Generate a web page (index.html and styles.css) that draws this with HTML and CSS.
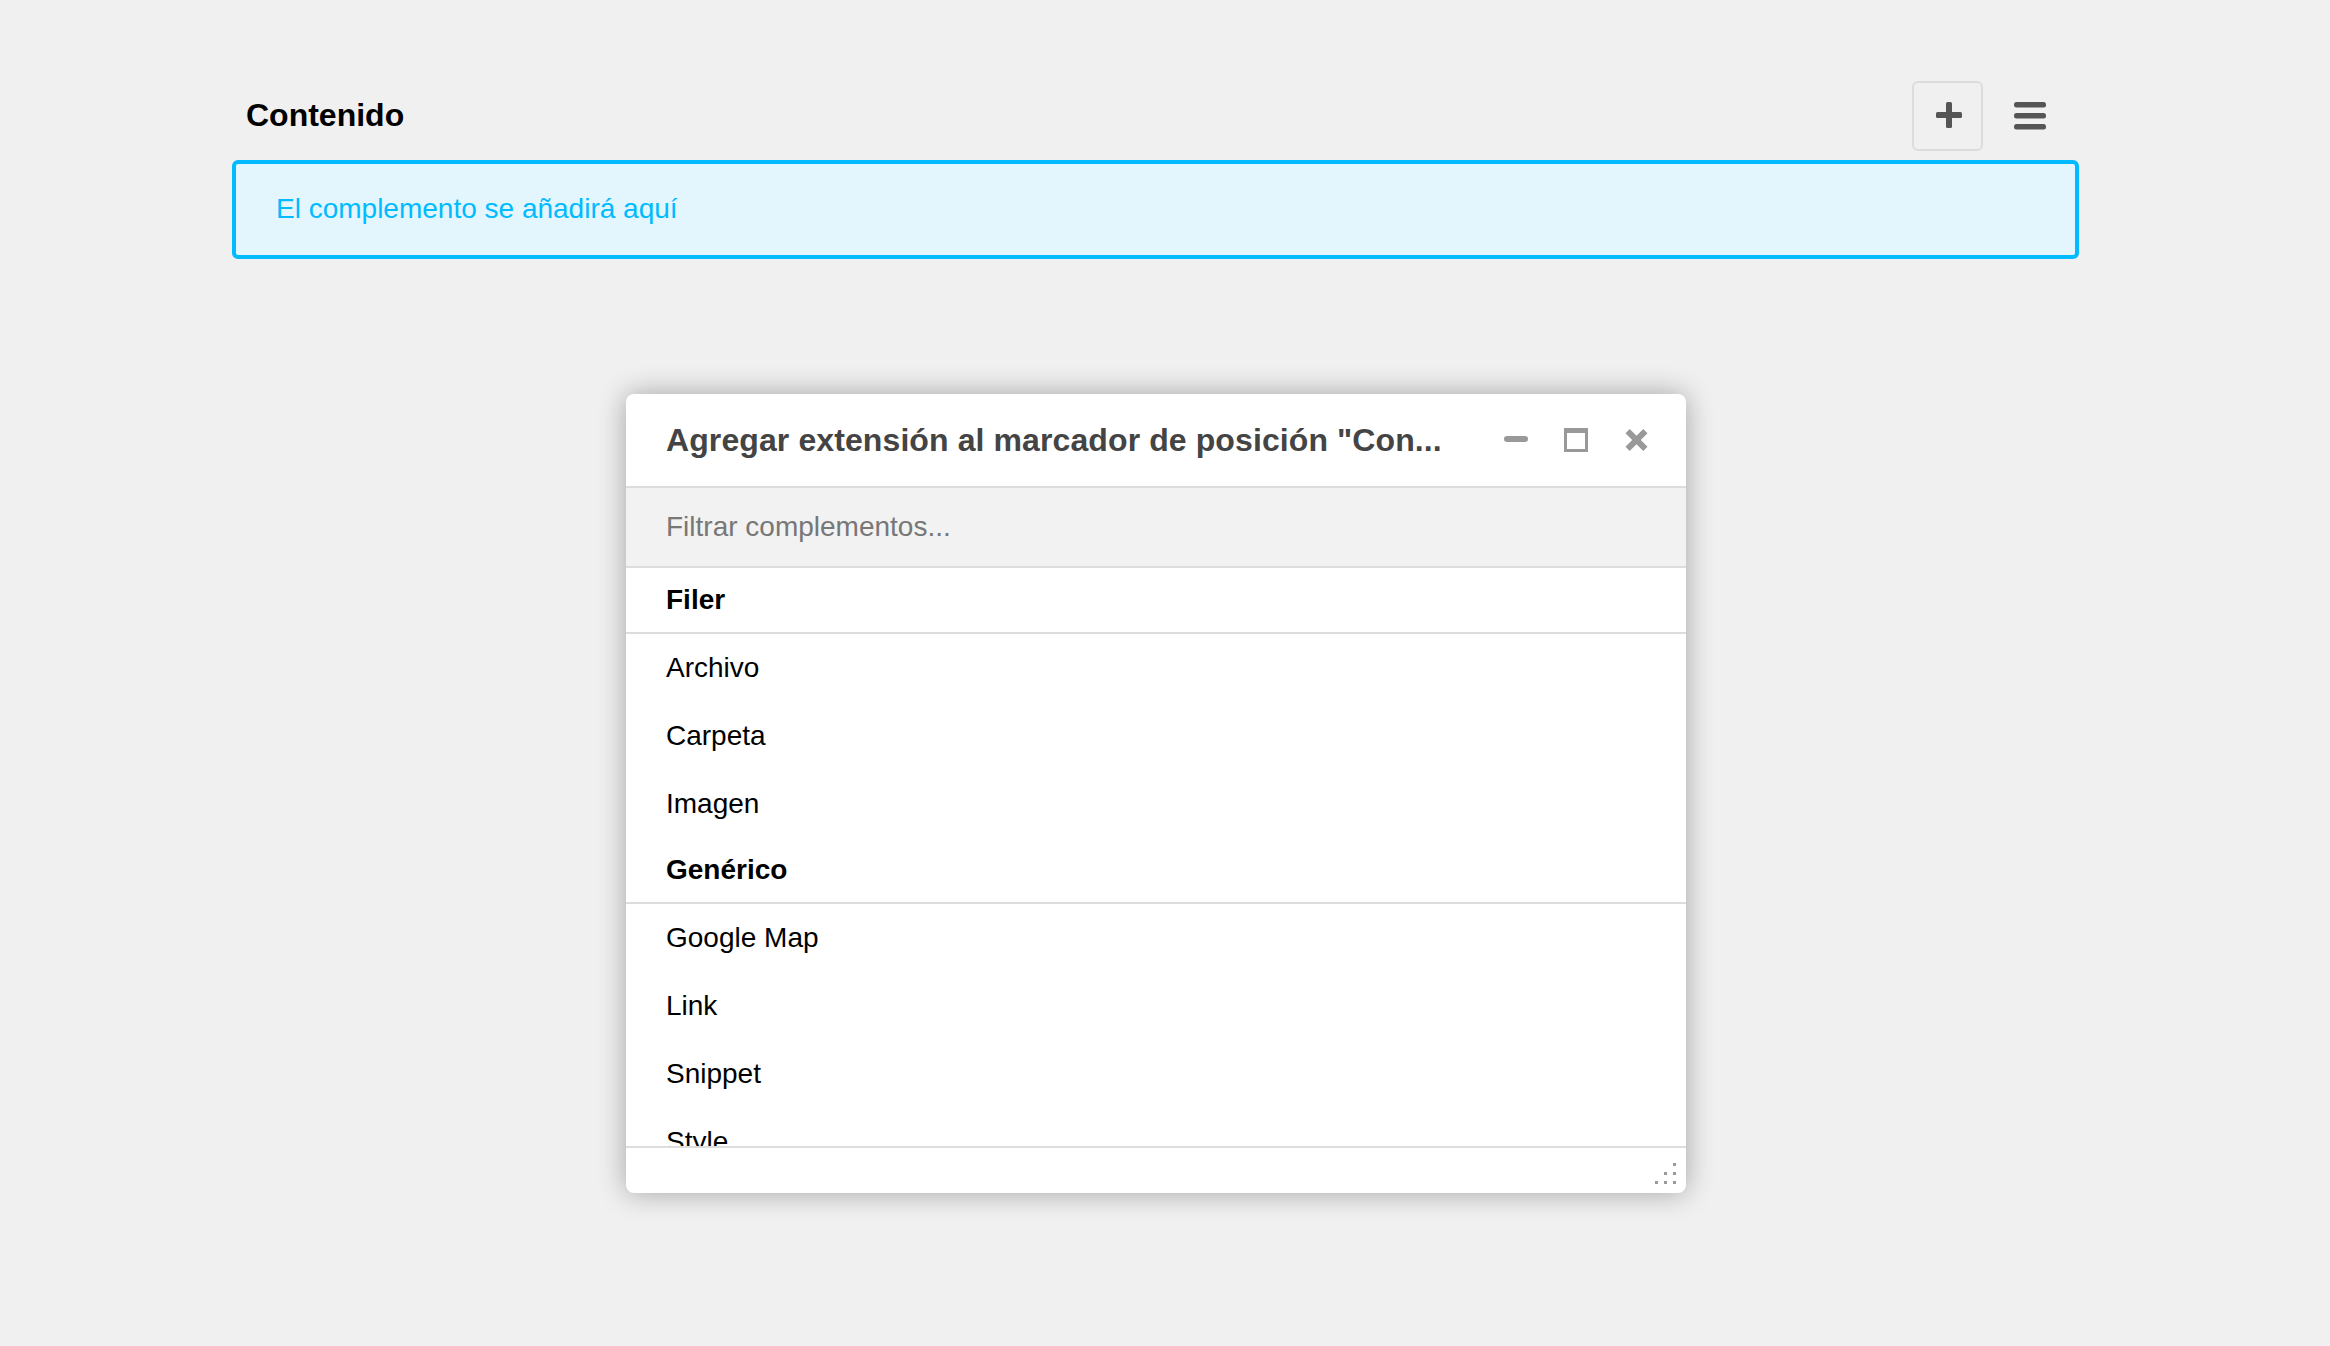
FILE: index.html
```html
<!DOCTYPE html>
<html lang="es">
<head>
<meta charset="utf-8">
<title>Contenido</title>
<link rel="stylesheet" href="styles.css">
</head>
<body>
<div class="page">
  <div class="toolbar">
    <h2 class="toolbar-title">Contenido</h2>
    <div class="toolbar-actions">
      <button class="tool-btn tool-btn--bordered" aria-label="Agregar">
        <svg width="26" height="26" viewBox="0 0 26 26"><rect x="0" y="10" width="26" height="6" rx="1.5"/><rect x="10" y="0" width="6" height="26" rx="1.5"/></svg>
      </button>
      <button class="tool-btn" aria-label="Menú">
        <svg width="32" height="28" viewBox="0 0 32 28"><rect x="0" y="0" width="32" height="5.5" rx="2.5"/><rect x="0" y="11" width="32" height="5.5" rx="2.5"/><rect x="0" y="22" width="32" height="5.5" rx="2.5"/></svg>
      </button>
    </div>
  </div>
  <div class="drop-target">El complemento se añadirá aquí</div>
</div>

<div class="modal">
  <div class="modal-header">
    <div class="modal-title">Agregar extensión al marcador de posición "Con...</div>
    <div class="modal-controls">
      <button class="ctrl-btn" aria-label="Minimizar"><span class="icon-min"></span></button>
      <button class="ctrl-btn" aria-label="Maximizar"><span class="icon-max"></span></button>
      <button class="ctrl-btn" aria-label="Cerrar">
        <svg width="25" height="24" viewBox="0 0 25 24"><path d="M3.6 3.1 L21.4 20.9 M21.4 3.1 L3.6 20.9"/></svg>
      </button>
    </div>
  </div>
  <div class="modal-filter">Filtrar complementos...</div>
  <div class="modal-list">
    <div class="list-group">Filer</div>
    <div class="list-item">Archivo</div>
    <div class="list-item">Carpeta</div>
    <div class="list-item">Imagen</div>
    <div class="list-group">Genérico</div>
    <div class="list-item">Google Map</div>
    <div class="list-item">Link</div>
    <div class="list-item">Snippet</div>
    <div class="list-item">Style</div>
  </div>
  <div class="modal-footer">
    <svg class="grip" width="21" height="21" viewBox="0 0 21 21"><rect x="18" y="0" width="3" height="3"/><rect x="9" y="9" width="3" height="3"/><rect x="18" y="9" width="3" height="3"/><rect x="0" y="18" width="3" height="3"/><rect x="9" y="18" width="3" height="3"/><rect x="18" y="18" width="3" height="3"/></svg>
  </div>
</div>
</body>
</html>
```

FILE: styles.css
```css
html, body {
  margin: 0;
  padding: 0;
}
body {
  background: #f0f0f0;
  font-family: "Liberation Sans", Arial, Helvetica, sans-serif;
  width: 2330px;
  height: 1346px;
  overflow: hidden;
}
.page {
  padding: 81px 251px 0 232px;
}
.toolbar {
  display: flex;
  align-items: center;
  justify-content: space-between;
  height: 70px;
  padding: 0 14px;
}
.toolbar-title {
  margin: 0;
  font-size: 32px;
  font-weight: bold;
  color: #000;
  line-height: 36px;
  position: relative;
  top: -1px;
}
.toolbar-actions {
  display: flex;
  gap: 11px;
}
.tool-btn {
  width: 71px;
  height: 70px;
  display: flex;
  align-items: center;
  justify-content: center;
  background: transparent;
  border: 2px solid transparent;
  border-radius: 6px;
  padding: 0;
  box-sizing: border-box;
}
.tool-btn svg {
  fill: #555;
}
.tool-btn--bordered {
  border-color: #dcdcdc;
}
.tool-btn--bordered svg {
  margin-left: 3px;
  margin-top: -2px;
}
.drop-target {
  margin-top: 9px;
  border: 4px solid #00bbff;
  border-radius: 6px;
  background: #e3f6fe;
  color: #00bbff;
  font-size: 28px;
  line-height: 32px;
  padding: 29px 40px 30px 40px;
}

/* Modal dialog */
.modal {
  position: absolute;
  left: 626px;
  top: 394px;
  width: 1060px;
  height: 799px;
  background: #fff;
  border-radius: 8px;
  box-shadow: 0 0 28px rgba(0, 0, 0, 0.32);
  display: flex;
  flex-direction: column;
  overflow: hidden;
}
.modal-header {
  height: 92px;
  flex: none;
  display: flex;
  align-items: center;
  border-bottom: 2px solid #dddddd;
  padding: 0 20px 0 40px;
}
.modal-title {
  flex: 1;
  font-size: 32px;
  font-weight: bold;
  color: #444;
  white-space: nowrap;
  overflow: hidden;
  line-height: 36px;
  letter-spacing: 0.1px;
}
.modal-controls {
  display: flex;
  height: 100%;
}
.ctrl-btn {
  width: 60px;
  height: 100%;
  border: 0;
  background: transparent;
  padding: 0;
  display: flex;
  align-items: center;
  justify-content: center;
}
.ctrl-btn svg path {
  stroke: #999;
  stroke-width: 6;
  fill: none;
}
.icon-min {
  display: block;
  width: 24px;
  height: 6px;
  border-radius: 3px;
  background: #999;
  margin-top: -2px;
}
.icon-max {
  display: block;
  width: 24px;
  height: 24px;
  box-sizing: border-box;
  border: 3px solid #999;
  border-top-width: 5px;
}
.modal-filter {
  flex: none;
  height: 78px;
  background: #f2f2f2;
  border-bottom: 2px solid #dddddd;
  padding: 0 40px;
  display: flex;
  align-items: center;
  font-size: 28px;
  color: #777;
}
.modal-list {
  flex: 1;
  overflow: hidden;
}
.list-group {
  font-size: 28px;
  font-weight: bold;
  color: #000;
  line-height: 32px;
  padding: 16px 40px;
  border-bottom: 2px solid #dddddd;
}
.list-item {
  font-size: 28px;
  color: #000;
  line-height: 32px;
  padding: 18px 40px;
}
.modal-footer {
  flex: none;
  height: 47px;
  box-sizing: border-box;
  border-top: 2px solid #dddddd;
  display: flex;
  justify-content: flex-end;
  align-items: flex-end;
  padding: 0 10px 9px 0;
}
.grip {
  fill: #999;
  display: block;
}
```
